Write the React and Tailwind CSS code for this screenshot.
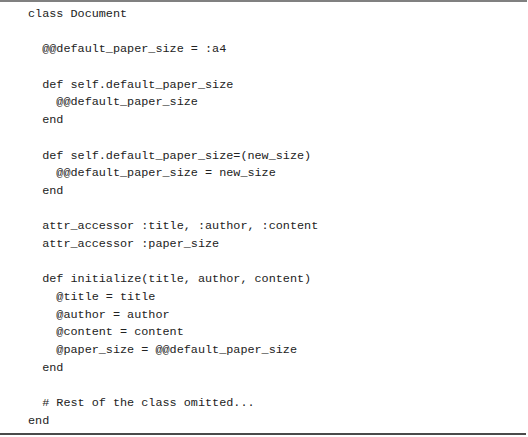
export default function App() {
  const lines = [
    "class Document",
    "",
    "  @@default_paper_size = :a4",
    "",
    "  def self.default_paper_size",
    "    @@default_paper_size",
    "  end",
    "",
    "  def self.default_paper_size=(new_size)",
    "    @@default_paper_size = new_size",
    "  end",
    "",
    "  attr_accessor :title, :author, :content",
    "  attr_accessor :paper_size",
    "",
    "  def initialize(title, author, content)",
    "    @title = title",
    "    @author = author",
    "    @content = content",
    "    @paper_size = @@default_paper_size",
    "  end",
    "",
    "  # Rest of the class omitted...",
    "end",
  ];
  return (
    <div className="w-[528px] h-[437px] bg-white">
      <div className="w-[527px] border-t-2 border-[#808080]">
        <div
          className="h-[431px] pl-[28px] pt-[4px] text-[11.8px] leading-[17.7px] text-[#222222] whitespace-pre"
          style={{ fontFamily: '"Liberation Mono", "Courier New", monospace' }}
        >
          {lines.map((l, i) => (
            <div key={i} className="h-[17.7px]">
              {l === "" ? "\u00a0" : l}
            </div>
          ))}
        </div>
        <div className="w-[526px] h-[2px] bg-[#4a4a4a]" />
      </div>
    </div>
  );
}
